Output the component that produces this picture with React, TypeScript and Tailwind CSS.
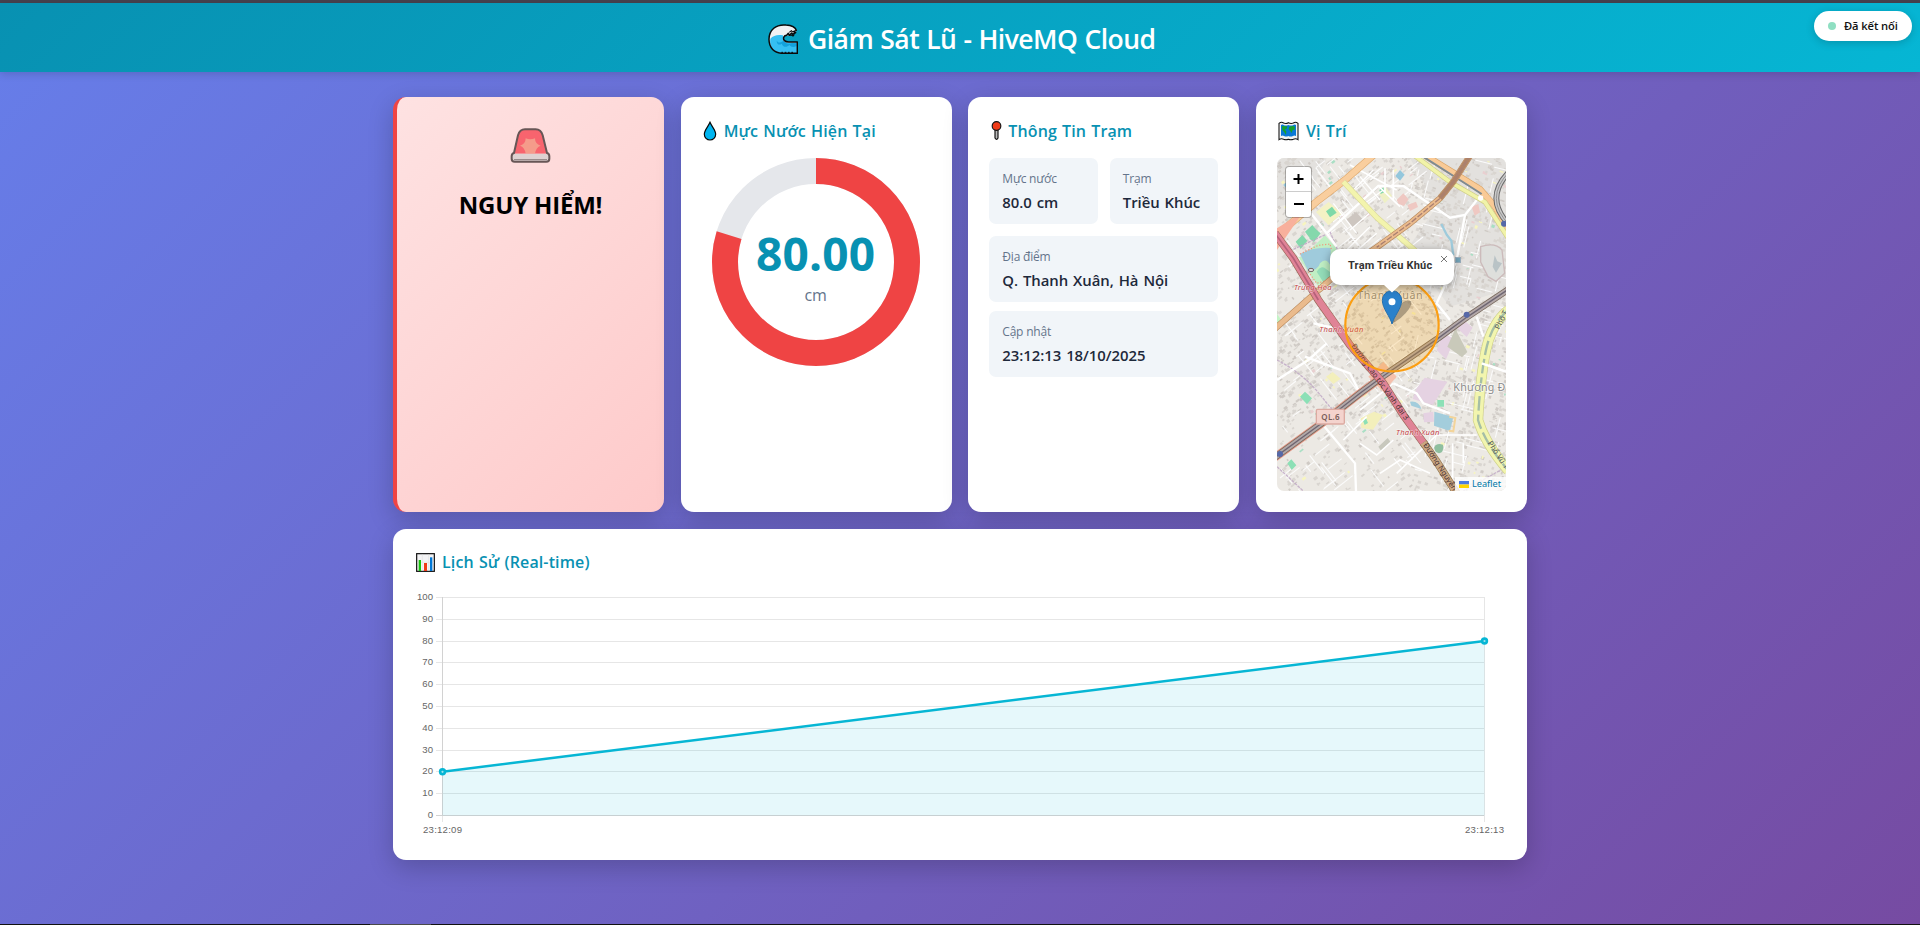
import React from "react";

const WaveIcon = () => (
  <svg className="h-[30px] w-[30px]" viewBox="0 0 90 90">
    <path d="M88 54H62c-11 0-17-6-15-14 2-6 8-8 15-4l8-6 8-4 9-6C84 11 70 4 54 3 24 0 3 18 3 46c0 26 16 41 40 42h45z" fill="#f1f1f3" />
    <path d="M44 34c-16-3-28 1-37 10-4 25 10 42 36 43h44V56H62c-15 0-20-8-16-20z" fill="#35bff2" />
    <path d="M26 50c6 9 16 6 21-1 5 12 18 12 25 8l14 1v8c-10 5-17 3-22-3-8 9-20 6-23-4-7 6-15 2-15-9z" fill="#0b9ad6" opacity=".8" />
    <path d="M88 54H62c-11 0-17-6-15-14 2-4 5-6 9-6l5-6 3 6 7-7 3 4 9-5-7-3 9-4C82 9 70 4 54 3 24 0 3 18 3 46c0 26 16 41 40 42h45z" fill="none" stroke="#0a0a0a" strokeWidth="4.5" strokeLinejoin="round" />
    <path d="M62 34l8-1 5 3 4-5M64 25l6-5 4 4" fill="none" stroke="#0a0a0a" strokeWidth="3.5" />
    <path d="M40 85h5m5 0h5m5 0h5m5 0h5" stroke="#0a0a0a" strokeWidth="3" />
  </svg>
);

const SirenIcon = () => (
  <svg className="h-[36px] w-[41px]" viewBox="0 0 123 108">
    <path d="M12 80L24 25Q29 7 45 7H77Q93 7 97 25L111 80Z" fill="#f8646e" />
    <path d="M47 34q14 6 28 0 0 17 17 22-14 4-17 24H47q-3-20-17-24 17-5 17-22z" fill="#f59b8a" />
    <rect x="6" y="80" width="111" height="24" rx="6" fill="#ded1d1" />
    <path d="M12 78L24 25Q29 7 45 7H77Q93 7 98 25L111 78Q118 80 118 88V95Q118 104 109 104H14Q5 104 5 95V88Q5 80 12 78Z" fill="none" stroke="#675656" strokeWidth="6" />
    <path d="M12 98H111" stroke="#8c7e7e" strokeWidth="3" />
  </svg>
);

const DropIcon = () => (
  <svg className="h-[20px] w-[14px]" viewBox="0 0 42 60">
    <path d="M21 4C15 18 4 27 4 40a17 17 0 0034 0C38 27 27 18 21 4z" fill="#00b5f0" stroke="#080808" strokeWidth="3.6" />
  </svg>
);

const PinIcon = () => (
  <svg className="h-[20px] w-[11px]" viewBox="0 0 33 60">
    <path d="M12 24h9v27q-4 8-9 0z" fill="#bbb" stroke="#111" strokeWidth="3.5" />
    <circle cx="16.5" cy="15" r="13" fill="#f03a17" stroke="#111" strokeWidth="3.4" />
  </svg>
);

const WorldMapIcon = () => (
  <svg className="h-[20px] w-[21px]" viewBox="0 0 63 60">
    <path d="M3 7q7-6 14-1 7 3 14-1 8 4 15 1 7-5 14 1v49q-7-5-14-1-7 3-15 0-7 3-14 0-7-4-14 1z" fill="#f2f2f2" stroke="#111" strokeWidth="3.2" />
    <path d="M9 12q5-3 9 1 6 2 13-1 7 3 14 1 5-4 9-1v33q-5-3-9 0-7 3-14 0-7 3-13 0-4-3-9 0z" fill="#0878d6" />
    <path d="M12 15l8 1 8 0-2 7-6 3 5 5-1 11-5-8-6-7zM34 17l10-2 7 2-2 10-5-1-3 10-4-6-5-5z" fill="#16a22a" />
  </svg>
);

const BarsIcon = () => (
  <svg className="h-[19px] w-[19px]" viewBox="0 0 57 57">
    <rect x="2" y="2" width="53" height="53" fill="#f3f3f5" stroke="#111" strokeWidth="3.6" />
    <path d="M19 4v50M38 4v50M4 28h50" stroke="#ddd" strokeWidth="1.5" />
    <rect x="8" y="21" width="7" height="33" fill="#16c60c" />
    <rect x="24" y="30" width="9" height="24" fill="#f03a17" />
    <rect x="42" y="13" width="7" height="41" fill="#0078d7" />
  </svg>
);

const Gauge = () => (
  <svg className="block h-[208px] w-[208px]" viewBox="-104 -104 208 208">
    <circle r="91" fill="none" stroke="#e5e7eb" strokeWidth="26" />
    <circle r="91" fill="none" stroke="#ef4444" strokeWidth="26" pathLength={100} strokeDasharray="79.8 20.2" transform="rotate(-90)" />
  </svg>
);

function makeRandom(seed: number) {
  let s = seed;
  return () => {
    s = (s * 16807) % 2147483647;
    return s / 2147483647;
  };
}

type Block = { x: number; y: number; w: number; h: number; a: number; f: string };
const buildings: Block[] = [];
const lanes: string[] = [];
const rnd = makeRandom(4127);
for (let i = 0; i < 2900; i++) {
  const x = 75 + rnd() * 700;
  const y = 200 + rnd() * 1010;
  const sparse = y > 980 && x < 560;
  if (sparse && rnd() < 0.65) continue;
  const p = rnd();
  buildings.push({
    x,
    y,
    w: 4 + rnd() * 10,
    h: 3 + rnd() * 7,
    a: x < 480 ? -38 : 20,
    f: p < 0.025 ? "#f7f5c0" : p < 0.035 ? "#a9dfc4" : p < 0.045 ? "#e9cfd0" : p < 0.35 ? "#cfcac5" : "#d9d5d0",
  });
}
for (let i = 0; i < 260; i++) {
  const x = 80 + rnd() * 690;
  const y = 205 + rnd() * 1000;
  const len = 20 + rnd() * 60;
  const a = ((x < 480 ? -38 : 14) + (rnd() < 0.5 ? 90 : 0)) * (Math.PI / 180);
  lanes.push(`M${x.toFixed(0)} ${y.toFixed(0)}l${(Math.cos(a) * len).toFixed(0)} ${(Math.sin(a) * len).toFixed(0)}`);
}

const RED_ROAD = "M75 430L130 505L205 630L300 765L400 880L460 975L525 1065";
const TRUNK = "M75 1102L215 1000L330 910L400 858L560 748L650 682L775 598";

const StreetMap = () => (
  <svg className="block h-[333px] w-[229px]" viewBox="81 204 687 999">
    <rect x="81" y="204" width="687" height="999" fill="#ece9e4" />
    <path d="M81 204H230L170 330L81 350zM480 204H768V600L600 650L470 480L560 350z" fill="#e3e1de" />
    {buildings.map((b, i) => (
      <rect key={i} x={b.x} y={b.y} width={b.w} height={b.h} fill={b.f} transform={`rotate(${b.a} ${b.x} ${b.y})`} />
    ))}
    <path d={lanes.join("")} stroke="#fbfbfb" strokeWidth="3.2" fill="none" />

    <path d="M158 500L225 436L262 478L240 500V585L205 590L145 500z" fill="#c0efc4" />
    <path d="M150 492Q190 470 242 474V528Q228 500 210 520Q205 540 175 544z" fill="#9fcbdc" />
    <path d="M200 545q15-22 28-8l16 12v16l-24 12z" fill="#93dcb8" />
    <path d="M150 492L205 466L240 462L244 478M175 545L200 580L235 570" fill="none" stroke="#ee9a7d" strokeWidth="3.5" strokeDasharray="4 5" />
    <path d="M137 455l20-20 15 17-20 24zM165 425l22-20 13 15-21 24zM188 432l12-12 12 10-20 26-14-10z" fill="#84d8ac" />
    <path d="M198 366l38-30 40 34-40 36z" fill="#f4f2c4" />
    <path d="M228 364l18-14 14 18-20 14z" fill="#7fd9a8" />
    <path d="M288 390l30-24 24 26-34 20z" fill="#cdc6c0" />
    <path d="M386 310l20-22 20 30-22 22z" fill="#eef0c4" />
    <path d="M388 300l12-8 4 14-12 6z" fill="#84d8ac" />
    <path d="M81 672l22 30-22 14z" fill="#c4f3c6" />
    <path d="M150 920l15-15 21 20-15 18zM112 1120l12-12 15 18-14 14z" fill="#8ce0b6" />
    <path d="M228 860l20-14 24 20-22 16zM332 985l40-20 27 10-30 44-35-5z" fill="#f3efbb" />
    <path d="M338 990l10-5 6 14-10 6zM562 930h20v20h-20z" fill="#8ce0b6" />
    <path d="M436 258l14-18 14 14-14 18z" fill="#94c7dc" />
    <path d="M100 285l14-12 14 14-12 14z" fill="#94c7dc" />
    <path d="M440 330l20-20 16 18-14 20-16-6zM472 345l26-10 6 16-24 12zM665 350l20-8 5 25-16 10z" fill="#efc8c2" />
    <path d="M500 895l24-32 68 12-44 70-60-18z" fill="#e5d2e2" />
    <path d="M560 780l20-52 34 20-26 60zM612 705l26-18 30 26-18 28zM520 970l30-5 2 30-30 2z" fill="#e5d2e2" />
    <path d="M592 770l24-54 36 70-16 16z" fill="#c9c9ba" />
    <path d="M553 965l57 16-10 42-48-16zM480 935q26-4 34 22l-30-10z" fill="#a3cddc" />
    <path d="M598 980l18 4-6 40-14-2" fill="none" stroke="#f3d49a" strokeWidth="6" />
    <path d="M553 1072q6-14 26-8 4 22-12 26-14-2-14-18z" fill="#8fbf9f" />
    <path d="M385 1070l28-26 10 14-30 24z" fill="#c8c8bd" />
    <path d="M574 402l16 32 14 18 6 44" fill="none" stroke="#9fcbdc" strokeWidth="7" />
    <path d="M692 470q44-14 64 10l8 70-26 24-24-14-22-44z" fill="#dedfdc" stroke="#cbb" strokeWidth="4" />
    <path d="M734 496l8 18 14 6-8 12-10 16-10-18z" fill="#b9c3c6" />

    <path d="M81 810Q160 850 215 920T260 960M81 1130L160 1203M770 1130L640 1203M240 425L262 478M130 478L235 430" fill="none" stroke="#bfa8c6" strokeWidth="4" strokeDasharray="9 3" opacity=".85" />

    <g fill="none" stroke="#fff" strokeWidth="7">
      <path d="M230 430L300 365L385 288H460L600 383L645 375L690 318" />
      <path d="M183 370L230 430L260 470M645 375L620 510L560 640L600 690" />
      <path d="M300 225L440 300M405 235V310M430 240V330M385 288L450 350" strokeWidth="5" />
      <path d="M81 870L175 810L230 760M165 800L300 850L325 900M215 1000L315 1120L318 1203" />
      <path d="M280 720L190 700M680 680L700 740M700 820L768 845M430 880L500 910L520 940L600 970" />
      <path d="M390 1150L450 1110L540 1150M440 1150L560 1035H680M608 1060V1203M640 1060V1120" strokeWidth="5" />
      <path d="M330 960L430 880M280 1050L350 980M330 1060L380 1095L430 1050" strokeWidth="5" />
      <path d="M320 430L250 340M360 410L290 480M300 500L380 430M370 360L300 420M330 260L390 330M310 300L370 240M345 340L400 300" strokeWidth="4" />
    </g>

    <path d="M372 194L285 270L200 335L75 440" fill="none" stroke="#e0ab6f" strokeWidth="22" />
    <path d="M372 194L285 270L200 335L75 440" fill="none" stroke="#f9ce9e" strokeWidth="18" />
    <path d="M160 365L81 415V480z" fill="#f8b09c" />
    <path d="M280 275L380 382L500 486" fill="none" stroke="#d9d79b" strokeWidth="17" />
    <path d="M280 275L380 382L500 486" fill="none" stroke="#f3f4ad" strokeWidth="13" />
    <path d="M522 194L690 298L735 350L775 420" fill="none" stroke="#dba567" strokeWidth="20" />
    <path d="M522 194L690 298L735 350L775 420" fill="none" stroke="#f9ca96" strokeWidth="16" />
    <path d="M490 194L600 276L705 336L775 445" fill="none" stroke="#d0cf89" strokeWidth="15" />
    <path d="M490 194L600 276L705 336L775 445" fill="none" stroke="#f1f3a8" strokeWidth="11" />
    <path d="M510 194L620 264L695 312" fill="none" stroke="#7e8b92" strokeWidth="6" />
    <path d="M662 194L610 275L570 325L480 400L380 472L240 570L75 716" fill="none" stroke="#b98a5e" strokeWidth="19" />
    <path d="M662 194L610 275L570 325L480 400L380 472L240 570L75 716" fill="none" stroke="#eabb8d" strokeWidth="15" />
    <path d="M662 194L610 275L570 325" fill="none" stroke="#b08467" strokeWidth="15" />
    <path d="M662 194L610 275L570 325L480 400L380 472" fill="none" stroke="#a97f72" strokeWidth="4" strokeDasharray="18 5" />
    <path d="M778 245Q700 325 778 405" fill="none" stroke="#6b6b6b" strokeWidth="17" />
    <path d="M778 245Q700 325 778 405" fill="none" stroke="#c9c9c9" strokeWidth="11" />
    <path d="M778 245Q700 325 778 405" fill="none" stroke="#777" strokeWidth="2" />

    <path d="M775 660Q725 700 708 780T684 990Q705 1060 775 1142" fill="none" stroke="#cfd089" strokeWidth="31" />
    <path d="M775 660Q725 700 708 780T684 990Q705 1060 775 1142" fill="none" stroke="#f2f5ae" strokeWidth="27" />
    <path d="M775 660Q725 700 708 780T684 990Q705 1060 775 1142" fill="none" stroke="#a5bea6" strokeWidth="7" strokeDasharray="44 12" />
    <path d="M695 820L768 845" stroke="#fff" strokeWidth="7" />

    <path d="M355 860l45-45 40 45-40 46z" fill="#f5c0ac" />
    <path d="M75 1102L215 1000L330 910L400 858" fill="none" stroke="#e79a88" strokeWidth="25" />
    <path d={TRUNK} fill="none" stroke="#7a6a5e" strokeWidth="20" />
    <path d={TRUNK} fill="none" stroke="#b3a8a8" strokeWidth="15" />
    <path d={TRUNK} fill="none" stroke="#6e6672" strokeWidth="4" />
    <path d={RED_ROAD} fill="none" stroke="#9c6a5a" strokeWidth="24" />
    <path d={RED_ROAD} fill="none" stroke="#e08396" strokeWidth="20" />
    <path d="M75 430L130 505L205 630" fill="none" stroke="#b5617a" strokeWidth="5" />
    <path d="M520 1058L560 1115L622 1213" fill="none" stroke="#8f7551" strokeWidth="24" />
    <path d="M520 1058L560 1115L622 1213" fill="none" stroke="#cba883" strokeWidth="20" />
    <circle cx="650" cy="674" r="9" fill="#5668a8" />
    <circle cx="90" cy="1092" r="9" fill="#5668a8" />
    <circle cx="762" cy="401" r="9" fill="#5668a8" />
    <circle cx="692" cy="324" r="8" fill="#fff" />
    <rect x="616" y="502" width="16" height="16" fill="#75a6bb" stroke="#9ab" strokeWidth="2" />
    <ellipse cx="183" cy="540" rx="8" ry="5" fill="#ddd" stroke="#766" strokeWidth="3" />

    <g className="font-['Noto_Sans',sans-serif]">
      <g fill="#c33e46" stroke="#fff" strokeOpacity=".6" strokeWidth="3" fontSize="23" fontStyle="italic" style={{ paintOrder: "stroke" }}>
        <text x="132" y="600" textLength="113">Trung Hòa</text>
        <text x="208" y="725" textLength="132">Thanh Xuân</text>
        <text x="438" y="1035" textLength="130">Thanh Xuân</text>
      </g>
      <g fill="#8b8b8b" stroke="#fff" strokeOpacity=".7" strokeWidth="5" fontSize="32" style={{ paintOrder: "stroke" }}>
        <text x="322" y="627" textLength="196">Thanh Xuân</text>
        <text x="610" y="903" textLength="156">Khương Đ</text>
      </g>
      <g fill="#4b3334" fontSize="23">
        <text transform="translate(303 768) rotate(54)" textLength="276">Đường Cao tốc Vành đai 3</text>
        <text transform="translate(519 1065) rotate(57)">Đường Nguyễn</text>
        <text transform="translate(748 720) rotate(-64)" fill="#555">Phố T</text>
        <text transform="translate(712 1060) rotate(56)" fill="#555">Phố Vũ T</text>
      </g>
      <rect x="199" y="958" width="84" height="44" rx="4" fill="#f4d3cd" stroke="#dcaaa1" strokeWidth="4" />
      <text x="214" y="990" textLength="55" fontSize="24" fontWeight="600" fill="#785d59">QL.6</text>
    </g>

    <circle cx="426" cy="704" r="140" fill="#f59e0b" fillOpacity=".22" stroke="#fb9e12" strokeWidth="6.5" />
    <path d="M426 702L446 650Q466 624 484 634Q486 655 452 684z" fill="#4a4031" opacity=".4" />
    <path d="M426 702C420 678 397 656 397 631a29 29 0 0158 0C455 656 432 678 426 702z" fill="#2a81cb" stroke="#256fae" strokeWidth="3" />
    <circle cx="426" cy="635" r="10.5" fill="#fff" />
  </svg>
);

const CardTitle = ({ icon, children, cls }: { icon: React.ReactNode; children: string; cls: string }) => (
  <h2 className="flex h-[22px] items-center whitespace-nowrap text-[16px] leading-[22px] font-semibold tracking-[0.12px] [word-spacing:0.9px] text-[#0891b2]">
    {icon}
    <span className={cls}>{children}</span>
  </h2>
);

const Info = ({ label, value, cls = "" }: { label: string; value: string; cls?: string }) => (
  <div className={`h-[66px] rounded-[7px] bg-[#f1f5f9] px-[13px] pt-[12px] whitespace-nowrap ${cls}`}>
    <div className="text-[12px] leading-[18px] tracking-[-0.2px] text-[#64748b]">{label}</div>
    <div className="mt-[3px] text-[14.9px] leading-[22px] font-semibold tracking-[-0.04px] [word-spacing:1.1px] text-[#1e293b]">{value}</div>
  </div>
);

const card = "rounded-[13px] bg-white shadow-[0_8px_26px_rgba(0,0,0,0.2)]";
const levels = [100, 90, 80, 70, 60, 50, 40, 30, 20, 10, 0];

const HistoryChart = () => (
  <svg className="block h-[250px] w-[1090px]" viewBox="415 590 1090 250">
    {levels.map((v) => {
      const y = Math.round(815 - v * 2.18) + 0.5;
      return (
        <g key={v}>
          <path d={`M436 ${y}H1485`} stroke={v === 0 ? "#d2d2d2" : "#e6e6e6"} />
          <text x="433" y={y + 2.9} textAnchor="end" fontSize="9.6" fill="#666">{v}</text>
        </g>
      );
    })}
    <path d="M442.5 597V816" stroke="#d2d2d2" />
    <path d="M442.5 816v6M1484.5 597v225" stroke="#e6e6e6" />
    <path d="M442.5 771.8L1484.5 641V815.5H442.5z" fill="#06b6d4" fillOpacity=".1" />
    <path d="M442.5 771.8L1484.5 641" stroke="#06b6d4" strokeWidth="2.4" />
    <circle cx="442.5" cy="771.8" r="2.4" fill="#9fe2ee" stroke="#06b6d4" strokeWidth="2.6" />
    <circle cx="1484.5" cy="641" r="2.4" fill="#9fe2ee" stroke="#06b6d4" strokeWidth="2.6" />
    <g fontSize="9.6" fill="#666" textAnchor="middle">
      <text x="442.5" y="832.8" textLength="39">23:12:09</text>
      <text x="1484.5" y="832.8" textLength="39">23:12:13</text>
    </g>
  </svg>
);

export default function App() {
  return (
    <div className="flex h-[925px] w-[1920px] flex-col overflow-hidden bg-[linear-gradient(135deg,#667eea_0%,#764ba2_100%)] font-['Open_Sans','Noto_Sans',sans-serif]">
      <div className="h-[3px] shrink-0 bg-[#46424f]" />
      <header className="relative flex h-[69px] shrink-0 items-center bg-[linear-gradient(135deg,#0891b2,#06b6d4)] pt-[2px] pl-[768px] shadow-[0_2px_8px_rgba(0,0,0,0.15)]">
        <WaveIcon />
        <h1 className="ml-[10px] whitespace-nowrap text-[26.5px] leading-[36px] font-semibold tracking-[-0.5px] [word-spacing:0.6px] text-white">Giám Sát Lũ - HiveMQ Cloud</h1>
        <div className="absolute top-[8px] right-[8px] flex h-[30px] w-[98px] items-center rounded-full bg-white pl-[14px] shadow-[0_2px_8px_rgba(0,0,0,0.18)]">
          <span className="h-[8px] w-[8px] rounded-full bg-[#8fdfc2]" />
          <span className="ml-[8px] whitespace-nowrap text-[11.2px] font-semibold tracking-[-0.1px] text-[#111]">Đã kết nối</span>
        </div>
      </header>

      <main className="ml-[393px] flex w-[1134px] grow flex-col gap-[17px] pt-[25px]">
        <section className="grid h-[415px] shrink-0 grid-cols-4 gap-[16.6px]">
          <div className="flex flex-col items-center rounded-[13px] border-l-4 border-[#ef4444] bg-[linear-gradient(135deg,#fee2e2,#fecaca)] pt-[30px] shadow-[0_8px_26px_rgba(0,0,0,0.2)]">
            <SirenIcon />
            <div className="mt-[25px] text-[24px] leading-[34px] font-bold tracking-[-0.2px] whitespace-nowrap text-black">NGUY HIỂM!</div>
          </div>

          <div className={`${card} px-[22px] pt-[23px]`}>
            <CardTitle icon={<DropIcon />} cls="ml-[7px]">Mực Nước Hiện Tại</CardTitle>
            <div className="mt-[16px] ml-[9px] grid h-[208px] w-[208px] grid-cols-1">
              <div className="col-start-1 row-start-1"><Gauge /></div>
              <div className="col-start-1 row-start-1 flex flex-col items-center pt-[65px]">
                <div className="text-[46px] leading-[60px] font-bold tracking-[0.2px] text-[#0891b2]">80.00</div>
                <div className="text-[16px] leading-[24px] text-[#64748b]">cm</div>
              </div>
            </div>
          </div>

          <div className={`${card} px-[21px] pt-[23px]`}>
            <CardTitle icon={<span className="ml-[2px]"><PinIcon /></span>} cls="ml-[6px]">Thông Tin Trạm</CardTitle>
            <div className="mt-[16px] grid grid-cols-2 gap-[12px]">
              <Info label="Mực nước" value="80.0 cm" />
              <Info label="Trạm" value="Triều Khúc" />
              <Info label="Địa điểm" value="Q. Thanh Xuân, Hà Nội" cls="col-span-2" />
            </div>
            <Info label="Cập nhật" value="23:12:13 18/10/2025" cls="mt-[9px]" />
          </div>

          <div className={`${card} px-[21px] pt-[23px]`}>
            <div className="pl-[1px]"><CardTitle icon={<WorldMapIcon />} cls="ml-[7px]">Vị Trí</CardTitle></div>
            <div className="relative mt-[16px] h-[333px] w-[229px] overflow-hidden rounded-[7px]">
              <StreetMap />
              <div className="absolute top-[9px] left-[9px] flex h-[50px] w-[25px] flex-col rounded-[3px] bg-white shadow-[0_0_0_1px_rgba(0,0,0,0.25)]">
                <svg viewBox="0 0 25 50" className="h-[50px] w-[25px]">
                  <path d="M0 24.5H25" stroke="#ccc" />
                  <path d="M7.5 12h10M12.5 7v10M8 37h10" stroke="#000" strokeWidth="2" />
                </svg>
              </div>
              <div className="absolute top-[91px] left-[53px] h-[36px] w-[124px] rounded-[10px] bg-white shadow-[0_2px_10px_rgba(0,0,0,0.4)]">
                <div className="pt-[8px] pl-[18px] font-['Roboto',sans-serif] text-[11px] leading-[17px] font-bold tracking-[0.2px] whitespace-nowrap text-[#333]">Trạm Triều Khúc</div>
                <svg className="absolute top-[36px] left-[54px] h-[8px] w-[16px]" viewBox="0 0 16 8"><path d="M0 0H16L8 7.5z" fill="#fff" /></svg>
                <svg className="absolute top-[6px] left-[110px] h-[8px] w-[8px]" viewBox="0 0 8 8"><path d="M1 1l6 6M7 1L1 7" stroke="#757575" /></svg>
              </div>
              <div className="absolute right-0 bottom-0 flex h-[14px] w-[51px] items-center bg-white/80 pl-[4px] font-['Noto_Sans',sans-serif] text-[9.2px] leading-[14px] text-[#0078a8]">
                <svg className="h-[7px] w-[10px]" viewBox="0 0 10 7"><path d="M0 0h10v3.5H0z" fill="#4c7be1" /><path d="M0 3.5h10V7H0z" fill="#ffd500" /></svg>
                <span className="ml-[3px]">Leaflet</span>
              </div>
            </div>
          </div>
        </section>

        <section className={`${card} h-[331px] shrink-0 px-[22px] pt-[22px]`}>
          <div className="pl-[1px]"><CardTitle icon={<BarsIcon />} cls="ml-[7px]">Lịch Sử (Real-time)</CardTitle></div>
          <div className="mt-[17px] font-['Liberation_Sans',sans-serif]"><HistoryChart /></div>
        </section>
      </main>
      <div className="flex h-px shrink-0 bg-[#111]"><span className="ml-[370px] h-px w-[61px] bg-[#4a4a4a]" /></div>
    </div>
  );
}
